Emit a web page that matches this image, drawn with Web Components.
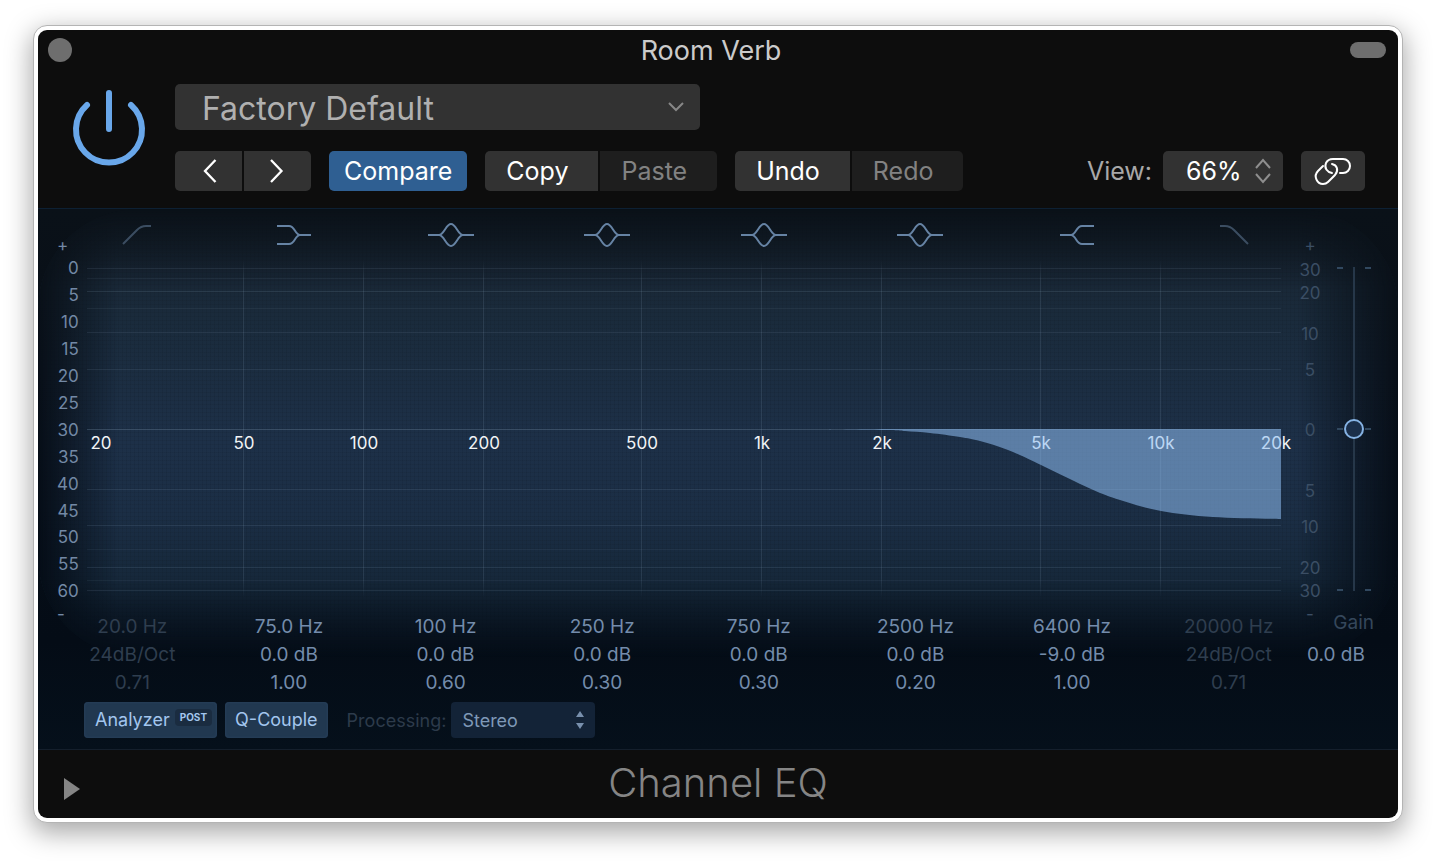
<!DOCTYPE html>
<html lang="en">
<head>
<meta charset="utf-8">
<meta name="viewport" content="width=device-width, initial-scale=1">
<title>Room Verb – Channel EQ</title>
<style>
  html { background: #fff; }
  body { margin: 0; padding: 25px 33px 41px; font-family: Inter, "Liberation Sans", sans-serif; }
</style>
</head>
<body>
<eq-window>
  <eq-titlebar slot="title">Room Verb</eq-titlebar>
  <eq-toolbar slot="toolbar"></eq-toolbar>
  <eq-panel></eq-panel>
  <eq-footer slot="footer">Channel EQ</eq-footer>
</eq-window>

<script>
const BASE = `
  *, *::before, *::after { box-sizing: border-box; }
  button, select, input { font: inherit; color: inherit; margin: 0; border: 0; background: none; }
  button { padding: 0; cursor: pointer; }
  svg { display: block; fill: none; overflow: visible; }
`;

function define(name, css, markup) {
  customElements.define(name, class extends HTMLElement {
    connectedCallback() {
      if (this.shadowRoot) return;
      const html = typeof markup === 'function' ? markup(this) : markup;
      this.attachShadow({ mode: 'open' }).innerHTML = `<style>${BASE}${css}</style>${html}`;
    }
  });
}

/* ---------- icons ---------- */
const BELL = [46, 24, '<path d="M0 12H11C16 12 18 1 23 1S30 12 35 12H46M11 12C16 12 18 23 23 23S30 12 35 12"/>'];
const ICONS = {
  power: [72, 76, '<path d="M14 15A33 33 0 1 0 58 15M36 3V39" stroke-width="6" stroke-linecap="round"/>'],
  prev: [14, 24, '<path d="M13.500 1L3 12L13.500 23" stroke-width="2.300"/>'],
  next: [14, 24, '<path d="M0 1L10.500 12L0 23" stroke-width="2.300"/>'],
  down: [16, 10, '<path d="M1 1L8 8L15 1" stroke-width="2"/>'],
  updown: [16, 24, '<path d="M1 9L8 1L15 9M1 15L8 23L15 15" stroke-width="2"/>'],
  carets: [8, 18, '<path d="M4 0L8 6H0ZM4 18L0 12H8Z" fill="currentColor" stroke="none"/>'],
  play: [16, 22, '<path d="M0 0L16 11L0 22Z" fill="currentColor" stroke="none"/>'],
  link: [38, 28, '<path d="M18 16C13 15 10 11 12 6Q14 2 19 2H29A7 7 0 0 1 29 16H26M9 9L4 14C-1 19 3 27 9 27Q12 27 14 25L21 18C25 13 23 8 18 7" stroke-width="2" stroke-linecap="round"/>'],
  bell: BELL,
  lowcut: [30, 20, '<path d="M1 19L15 5Q19 1 24 1H29"/>'],
  lowshelf: [34, 20, '<path d="M0 1H12C18 1 18 10 23 10H34M0 19H12C18 19 18 10 23 10"/>'],
  highshelf: [34, 20, '<path d="M34 1H22C16 1 16 10 11 10H0M34 19H22C16 19 16 10 11 10"/>'],
  highcut: [30, 20, '<path d="M1 1H6Q11 1 15 5L29 19"/>']
};

define('eq-icon', `:host { display: inline-block; } svg { stroke: currentColor; stroke-width: 2; }`, el => {
  const [w, h, body] = ICONS[el.getAttribute('name')];
  return `<svg width="${w}" height="${h}" viewBox="0 0 ${w} ${h}" aria-hidden="true">${body}</svg>`;
});

/* ---------- window frame ---------- */
define('eq-window', `
  :host { display: block; }
  .frame { padding: 4px; border: 1px solid #b4b4b4; border-radius: 14px; background: #fff; box-shadow: 0 8px 26px 2px rgba(0,0,0,.34); }
  main { overflow: hidden; border-radius: 9px; background: #0d0d0d; }
`, `<div class="frame"><main><slot name="title"></slot><slot name="toolbar"></slot><slot></slot><slot name="footer"></slot></main></div>`);

define('eq-titlebar', `
  :host { display: flex; align-items: center; justify-content: space-between; height: 40px; padding: 0 12px 0 10px; }
  h1 { margin: 0; padding-top: 2px; font-size: 27px; font-weight: 400; line-height: 32px; color: #cbcbcb; }
  button { background: #6e6e6e; }
  .close { width: 24px; height: 24px; border-radius: 12px; }
  .shade { width: 36px; height: 16px; border-radius: 8px; }
`, `<button class="close" aria-label="Close"></button><h1><slot></slot></h1><button class="shade" aria-label="Toggle toolbar"></button>`);

/* ---------- header controls ---------- */
define('eq-button', `
  :host { display: block; }
  button { display: flex; align-items: center; height: 40px; padding: 0 30px 0 21px; border-radius: 5px;
    background: #323232; color: #fff; font-size: 25px; line-height: 30px; white-space: nowrap; }
  button:disabled { background: #1e1e1e; color: #828282; cursor: default; }
  :host([join="start"]) button { border-radius: 5px 0 0 5px; }
  :host([join="end"]) button { border-radius: 0 5px 5px 0; }
  :host([active]) button { background: #2f5f92; padding: 0 15px; }
  :host([icon]) button { width: 67px; padding: 0; justify-content: center; }
  :host([icon="wide"]) button { width: 64px; }
`, el => `<button ${el.hasAttribute('disabled') ? 'disabled' : ''} ${el.hasAttribute('label') ? `aria-label="${el.getAttribute('label')}"` : ''}><slot></slot></button>`);

define('eq-select', `
  :host { display: block; --fg: #fff; --bg: #323232; --mark: #8e8e8e; --label: #a8a8a8; font-size: 25px; }
  div { display: flex; align-items: center; gap: 11px; }
  label { color: var(--label); white-space: nowrap; }
  .box { flex: 1; display: grid; align-items: center; }
  .box > * { grid-area: 1 / 1; }
  select { appearance: none; width: 100%; height: 40px; padding: 0 36px 0 23px; border-radius: 5px;
    background: var(--bg); color: var(--fg); }
  eq-icon { justify-self: end; margin-right: 12px; color: var(--mark); pointer-events: none; }
  :host([kind="preset"]) { --fg: #b0b0b0; --mark: #878787; font-size: 32px; }
  :host([kind="preset"]) select { height: 46px; padding: 2px 36px 0 27px; }
  :host([kind="preset"]) eq-icon { margin-right: 16px; }
  :host([kind="view"]) .box { flex: 0 0 120px; }
  :host([kind="panel"]) { --fg: #7f99b8; --bg: #132337; --mark: #7890ad; --label: #2d3b4b; font-size: 18px; }
  :host([kind="panel"]) div { gap: 5px; }
  :host([kind="panel"]) .box { flex: 0 0 144px; }
  :host([kind="panel"]) select { height: 36px; padding-left: 11px; border-radius: 4px; }
  :host([kind="panel"]) eq-icon { margin-right: 11px; }
`, el => {
  const kind = el.getAttribute('kind');
  const icon = { preset: 'down', view: 'updown', panel: 'carets' }[kind];
  const label = el.getAttribute('label');
  const aria = kind === 'preset' ? `aria-label="${label}"` : '';
  return `<div>${aria ? '' : `<label for="s">${label}</label>`}<span class="box"><select id="s" ${aria}>
    ${el.getAttribute('options').split('|').map(o => `<option>${o}</option>`).join('')}
  </select><eq-icon name="${icon}"></eq-icon></span></div>`;
});

define('eq-toolbar', `
  :host { display: grid; grid-template-columns: 72px 1fr; column-gap: 30px; padding: 14px 33px 17px 35px; }
  .power { align-self: start; margin-top: 6px; color: #69a7ea; }
  .rows { display: grid; gap: 21px; }
  eq-select[kind="preset"] { max-width: 525px; }
  .row { display: flex; gap: 18px; }
  .pair { display: flex; gap: 2px; }
  .view { margin-left: auto; }
`, `
  <button class="power" aria-label="Bypass"><eq-icon name="power"></eq-icon></button>
  <div class="rows">
    <eq-select kind="preset" label="Preset" options="Factory Default"></eq-select>
    <div class="row">
      <div class="pair">
        <eq-button icon join="start" label="Previous preset"><eq-icon name="prev"></eq-icon></eq-button>
        <eq-button icon join="end" label="Next preset"><eq-icon name="next"></eq-icon></eq-button>
      </div>
      <eq-button active>Compare</eq-button>
      <div class="pair"><eq-button join="start">Copy</eq-button><eq-button join="end" disabled>Paste</eq-button></div>
      <div class="pair"><eq-button join="start">Undo</eq-button><eq-button join="end" disabled>Redo</eq-button></div>
      <eq-select class="view" kind="view" label="View:" options="66%|100%|150%"></eq-select>
      <eq-button icon="wide" label="Link"><eq-icon name="link"></eq-icon></eq-button>
    </div>
  </div>`);

/* ---------- scales: each tick is centred on its value along the track ---------- */
define('eq-scale', `
  :host { display: grid; font-size: 17px; line-height: 20px; color: #7389a5; }
  span { display: flex; white-space: nowrap; }
  :host([axis="x"]) span { width: 0; justify-content: center; }
  :host([axis="y"]) span { height: 0; align-items: center; }
  :host([side="left"]) span { justify-content: flex-end; }
  :host([side="right"]) span { justify-content: center; }
  :host([side="left"]) .sign { justify-content: flex-start; }
`, el => {
  const ticks = el.getAttribute('ticks').split(' ').map(t => t.split('@'));
  const end = +el.getAttribute('length');
  const tracks = ticks.map(([, p], i) => ((i + 1 < ticks.length ? ticks[i + 1][1] : end) - p) + 'fr');
  const first = +ticks[0][1];
  const lead = first ? first + 'fr ' : '';
  const prop = el.getAttribute('axis') === 'x' ? 'columns' : 'rows';
  const spans = ticks.map(([t]) => `<span${/[+-]/.test(t) ? ' class="sign"' : ''}>${t}</span>`).join('');
  return `<style>:host { grid-template-${prop}: ${lead}${tracks.join(' ')}; }</style>${lead ? '<i></i>' : ''}${spans}`;
});

/* ---------- response graph ---------- */
const FREQ_LINES = [159, 279, 399, 557, 677, 797, 956, 1076];
const DB_LINES = [[8, .13], [18, .08], [31, .15], [48, .1], [72, .13], [109, .12], [169, .26], [229, .14], [265, .14], [289, .08], [307, .14], [320, .09], [330, .13]];
const CURVE = [[735, 169], [800, 170], [820, 171], [845, 173], [875, 177], [895, 181], [923, 190], [956, 205], [1006, 229], [1035, 240], [1076, 251], [1128, 257], [1196, 259]];

function smooth(p) {
  let d = `M${p[0]}`;
  for (let i = 0; i < p.length - 1; i++) {
    const a = p[i - 1] || p[i], b = p[i], c = p[i + 1], e = p[i + 2] || c;
    d += `C${b[0] + (c[0] - a[0]) / 6} ${b[1] + (c[1] - a[1]) / 6} ${c[0] - (e[0] - b[0]) / 6} ${c[1] - (e[1] - b[1]) / 6} ${c[0]} ${c[1]}`;
  }
  return d;
}

define('eq-graph', `
  :host { display: grid; grid-template-rows: 169px 169px; }
  svg { width: 100%; height: 100%; grid-area: 1 / 1 / 3 / 2; }
  eq-scale { grid-area: 2 / 1; padding-top: 4px; color: #f2f4f6; }
`, () => `
  <svg viewBox="0 0 1196 338" preserveAspectRatio="none" aria-hidden="true">
    <defs><linearGradient id="fade" x1="0" y1="0" x2="0" y2="1">
      <stop offset="0" stop-color="#8aa5bf" stop-opacity="0"/><stop offset=".06" stop-color="#8aa5bf" stop-opacity=".15"/>
      <stop offset=".94" stop-color="#8aa5bf" stop-opacity=".15"/><stop offset="1" stop-color="#8aa5bf" stop-opacity="0"/>
    </linearGradient></defs>
    ${FREQ_LINES.map(x => `<rect x="${x - 1}" y="0" width="1" height="338" fill="url(#fade)"/>`).join('')}
    ${DB_LINES.map(([y, o]) => `<rect x="2" y="${y}" width="1194" height="1" fill="#8aa5bf" fill-opacity="${o}"/>`).join('')}
  </svg>
  <eq-scale axis="x" length="1196" ticks="20@16 50@159 100@279 200@399 500@557 1k@677 2k@797 5k@956 10k@1076 20k@1191"></eq-scale>
  <svg viewBox="0 0 1196 338" preserveAspectRatio="none" role="img" aria-label="High shelf at 6400 Hz, -9 dB">
    <path d="${smooth(CURVE)}V169Z" fill="#90bff4" fill-opacity=".55"/>
  </svg>`);

define('eq-gain', `
  :host { display: grid; justify-content: center; }
  .track { grid-area: 1 / 1; width: 34px; display: grid; grid-template-columns: 6px 1fr 6px; grid-template-rows: auto 1fr auto; }
  .track::before { content: ""; grid-area: 1 / 2 / 4 / 3; justify-self: center; width: 2px; background: #263749; }
  b { height: 2px; background: #31485f; align-self: center; }
  b:nth-child(odd) { grid-column: 1; }
  b:nth-child(even) { grid-column: 3; }
  b:nth-child(-n+2) { grid-row: 1; }
  b:nth-child(n+3) { grid-row: 2; }
  b:nth-child(n+5) { grid-row: 3; }
  input { grid-area: 1 / 1; justify-self: center; appearance: none; writing-mode: vertical-lr; width: 20px; height: 100%; padding: 0; z-index: 1; }
  input::-webkit-slider-thumb { appearance: none; width: 20px; height: 20px; border: 2px solid #86b3e4; border-radius: 10px; background: #1b2f4a; }
`, `<span class="track"><b></b><b></b><b></b><b></b><b></b><b></b></span><input type="range" min="-30" max="30" value="0" aria-label="Gain">`);

/* ---------- bands ---------- */
const BANDS = [
  ['lowcut', 'Low cut', '20.0 Hz', '24dB/Oct', '0.71', 1],
  ['lowshelf', 'Low shelf', '75.0 Hz', '0.0 dB', '1.00'],
  ['bell', 'Bell 1', '100 Hz', '0.0 dB', '0.60'],
  ['bell', 'Bell 2', '250 Hz', '0.0 dB', '0.30'],
  ['bell', 'Bell 3', '750 Hz', '0.0 dB', '0.30'],
  ['bell', 'Bell 4', '2500 Hz', '0.0 dB', '0.20'],
  ['highshelf', 'High shelf', '6400 Hz', '-9.0 dB', '1.00'],
  ['highcut', 'High cut', '20000 Hz', '24dB/Oct', '0.71', 1]
];

define('eq-band-icons', `
  :host { display: grid; grid-template-columns: repeat(8, 1fr); justify-items: center; align-items: center; padding: 4px 86px 0 21px; color: #6683a4; }
  .off { color: #3b4d61; }
`, () => BANDS.map(b => `<button aria-label="${b[1]}"${b[5] ? ' class="off"' : ''}><eq-icon name="${b[0]}"></eq-icon></button>`).join(''));

define('eq-band-values', `
  :host { display: grid; grid-template-columns: repeat(8, 1fr) 91px; padding-left: 16px; font-size: 19px; line-height: 28px; color: #748cab; }
  div { display: grid; text-align: center; align-content: start; }
  .off { color: #2f3e4f; }
  .gain { justify-items: start; row-gap: 8px; }
  label { justify-self: end; margin-right: 24px; line-height: 20px; color: #35475b; }
`, () => BANDS.map(b => `<div${b[5] ? ' class="off"' : ''}><span>${b[2]}</span><span>${b[3]}</span><span>${b[4]}</span></div>`).join('')
  + `<div class="gain"><label for="g">Gain</label><output id="g">0.0 dB</output></div>`);

/* ---------- bottom strip ---------- */
define('eq-toggle', `
  :host { display: block; }
  button { display: flex; align-items: center; gap: 5px; height: 36px; padding: 0 10px; border-radius: 4px; background: #213850;
    box-shadow: inset 0 0 3px #2b4560; color: #a3c6ee; font-size: 18px; line-height: 24px; }
  :host([tag]) button { padding: 0 5px 0 11px; }
  small { align-self: flex-start; margin-top: 7px; padding: 0 5px; border-radius: 4px; background: #1a2c40; font-size: 10px; font-weight: 700; line-height: 17px; }
`, el => `<button aria-pressed="true"><slot></slot>${el.hasAttribute('tag') ? `<small>${el.getAttribute('tag')}</small>` : ''}</button>`);

define('eq-panel', `
  :host { display: block; isolation: isolate; border-top: 1px solid #0d2033; border-bottom: 1px solid #141f2c; background: linear-gradient(#0a1118, #080f18 30%, #040c16 80%, #05101b); }
  .screen { display: grid; grid-template-columns: 47px 1fr 58px 30px; padding-right: 29px; grid-template-rows: 51px 338px auto; }
  .glow { grid-area: 1 / 1 / 4 / 5; z-index: -1; margin: 0 -29px 40px 0; border-radius: 100px;
    background:
      repeating-linear-gradient(90deg, rgba(0,0,0,.06) 0 1px, transparent 1px 4px),
      repeating-linear-gradient(0deg, rgba(0,0,0,.06) 0 1px, transparent 1px 4px),
      linear-gradient(#17222e, #1a2b3c 25%, #1d3048 52%, #1b2e45 68%, #152739 85%, #0f1e2e);
    -webkit-mask: linear-gradient(90deg, transparent, #000 80px calc(100% - 100px), transparent), linear-gradient(transparent, #000 80px calc(100% - 80px), transparent);
    -webkit-mask-composite: source-in; mask-composite: intersect; }
  eq-band-icons { grid-area: 1 / 1 / 2 / 5; margin-right: -29px; }
  .left { grid-area: 2 / 1; margin: -15px 8px -16px 19px; }
  eq-graph { grid-area: 2 / 2; }
  .right { grid-area: 2 / 3; margin: -15px 0 -16px; color: #3b4e64; }
  eq-gain { grid-area: 2 / 4; margin: 7px 0; }
  eq-band-values { grid-area: 3 / 1 / 4 / 5; margin-right: -29px; padding-top: 15px; }
  .strip { display: flex; gap: 8px; padding: 5px 46px 11px; }
  eq-select { margin-left: 11px; }
`, `
  <div class="screen">
    <div class="glow"></div>
    <eq-band-icons></eq-band-icons>
    <eq-scale class="left" axis="y" side="left" length="369" ticks="+@0 0@23 5@50 10@77 15@104 20@131 25@158 30@185 35@212 40@239 45@266 50@292 55@319 60@346 -@369"></eq-scale>
    <eq-graph></eq-graph>
    <eq-scale class="right" axis="y" side="right" length="369" ticks="+@0 30@25 20@48 10@89 5@125 0@185 5@246 10@282 20@323 30@346 -@369"></eq-scale>
    <eq-gain></eq-gain>
    <eq-band-values></eq-band-values>
  </div>
  <div class="strip">
    <eq-toggle tag="POST">Analyzer</eq-toggle>
    <eq-toggle>Q-Couple</eq-toggle>
    <eq-select kind="panel" label="Processing:" options="Stereo|Left|Right|Mid|Side"></eq-select>
  </div>`);

define('eq-footer', `
  :host { display: grid; grid-template-columns: 1fr auto 1fr; align-items: center; padding: 0 26px; height: 68px; color: #858585; }
  button { justify-self: start; padding-top: 14px; }
  h2 { margin: 0; font-size: 40px; font-weight: 300; line-height: 66px; align-self: start; }
`, `<button aria-label="Show details"><eq-icon name="play"></eq-icon></button><h2><slot></slot></h2>`);
</script>
</body>
</html>
